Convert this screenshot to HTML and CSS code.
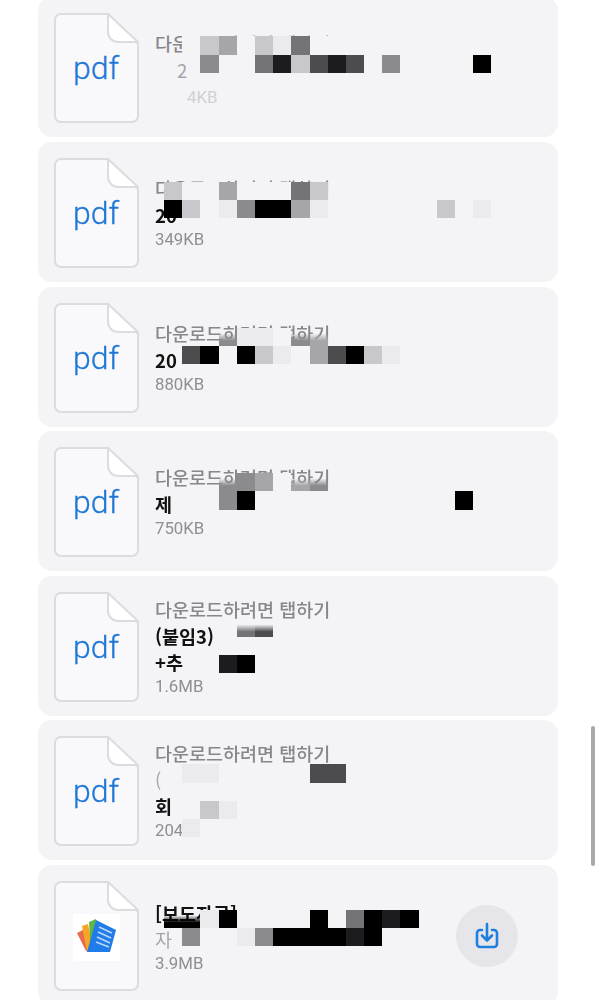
FILE: index.html
```html
<!DOCTYPE html>
<html lang="ko">
<head>
    <meta charset="UTF-8">
    <meta name="viewport" content="width=device-width, initial-scale=1.0">
    <title>첨부파일</title>
    <link rel="stylesheet" href="styles.css">
</head>
<body>
    <svg width="0" height="0" class="defs">
        <defs>
            <g id="fileShape">
                <path class="sheet" d="M7 1H54L84 31V103a6 6 0 0 1-6 6H7a6 6 0 0 1-6-6V7a6 6 0 0 1 6-6Z"/>
                <path class="fold" d="M54 1V19a10 10 0 0 0 10 10H84Z"/>
            </g>
        </defs>
    </svg>

    <div class="list">
        <!-- Card 1 -->
        <div class="card">
            <svg class="file" width="85" height="110" viewBox="0 0 85 110"><use href="#fileShape"/><text class="pdf" x="42" y="66" text-anchor="middle">pdf</text></svg>
            <div class="info">
                <div class="hint">다운로드하려면 탭하기</div>
                <div class="name ghost indent1">2</div>
                <div class="size ghost indent2">4KB</div>
            </div>
            <div class="mosaic">
                <div class="mrow"><i></i><i class="m0"></i><i class="m2"></i><i class="m3"></i><i class="m0"></i><i class="m2"></i><i class="m1"></i><i class="m5"></i><i class="m0"></i><i class="m0"></i></div>
                <div class="mrow"><i></i><i></i><i class="m4"></i><i></i><i></i><i class="m5"></i><i class="m7"></i><i class="m2"></i><i class="m6"></i><i class="m7"></i><i class="m6"></i><i></i><i class="m4"></i><i></i><i></i><i></i><i></i><i class="m8"></i></div>
            </div>
        </div>

        <!-- Card 2 -->
        <div class="card">
            <svg class="file" width="85" height="110" viewBox="0 0 85 110"><use href="#fileShape"/><text class="pdf" x="42" y="66" text-anchor="middle">pdf</text></svg>
            <div class="info">
                <div class="hint">다운로드하려면 탭하기</div>
                <div class="name">20</div>
                <div class="size">349KB</div>
            </div>
            <div class="mosaic">
                <div class="mrow"><i class="m2"></i><i class="m0"></i><i class="m0"></i><i class="m3"></i><i class="m0"></i><i class="m0"></i><i class="m0"></i><i class="m5"></i><i class="m2"></i></div>
                <div class="mrow"><i class="m8"></i><i class="m2"></i><i class="m0"></i><i class="m1"></i><i class="m4"></i><i class="m8"></i><i class="m8"></i><i class="m3"></i><i class="m1"></i><i></i><i></i><i></i><i></i><i></i><i></i><i class="m2"></i><i></i><i class="m1"></i></div>
            </div>
        </div>

        <!-- Card 3 -->
        <div class="card">
            <svg class="file" width="85" height="110" viewBox="0 0 85 110"><use href="#fileShape"/><text class="pdf" x="42" y="66" text-anchor="middle">pdf</text></svg>
            <div class="info">
                <div class="hint">다운로드하려면 탭하기</div>
                <div class="name">20</div>
                <div class="size">880KB</div>
            </div>
            <div class="mosaic">
                <div class="mrow"><i></i><i></i><i></i><i class="m4 low"></i><i class="m1"></i><i class="m1"></i><i class="m0"></i><i class="m4 low"></i><i class="m3 low"></i></div>
                <div class="mrow"><i></i><i class="m6"></i><i class="m8"></i><i class="m0"></i><i class="m8"></i><i class="m2"></i><i class="m1"></i><i class="m0"></i><i class="m3"></i><i class="m6"></i><i class="m8"></i><i class="m2"></i><i class="m1"></i></div>
            </div>
        </div>

        <!-- Card 4 -->
        <div class="card">
            <svg class="file" width="85" height="110" viewBox="0 0 85 110"><use href="#fileShape"/><text class="pdf" x="42" y="66" text-anchor="middle">pdf</text></svg>
            <div class="info">
                <div class="hint">다운로드하려면 탭하기</div>
                <div class="name">제</div>
                <div class="size">750KB</div>
            </div>
            <div class="mosaic">
                <div class="mrow"><i></i><i></i><i></i><i class="m4 low"></i><i class="m4"></i><i class="m3"></i><i class="m0"></i><i class="m3 low"></i><i class="m4 low"></i></div>
                <div class="mrow"><i></i><i></i><i></i><i class="m4"></i><i class="m8"></i><i></i><i></i><i></i><i></i><i></i><i></i><i></i><i></i><i></i><i></i><i></i><i class="m8"></i></div>
            </div>
        </div>

        <!-- Card 5 -->
        <div class="card">
            <svg class="file" width="85" height="110" viewBox="0 0 85 110"><use href="#fileShape"/><text class="pdf" x="42" y="66" text-anchor="middle">pdf</text></svg>
            <div class="info">
                <div class="hint">다운로드하려면 탭하기</div>
                <div class="name">(붙임3)</div>
                <div class="name">+추</div>
                <div class="size">1.6MB</div>
            </div>
            <div class="mosaic">
                <div class="mrow"><i></i><i></i><i></i><i></i><i class="m5 low"></i><i class="m6 low"></i></div>
                <div class="mrow"></div>
                <div class="mrow"><i></i><i></i><i></i><i class="m7"></i><i class="m8"></i></div>
            </div>
        </div>

        <!-- Card 6 -->
        <div class="card">
            <svg class="file" width="85" height="110" viewBox="0 0 85 110"><use href="#fileShape"/><text class="pdf" x="42" y="66" text-anchor="middle">pdf</text></svg>
            <div class="info">
                <div class="hint">다운로드하려면 탭하기</div>
                <div class="name ghost">(</div>
                <div class="name">회</div>
                <div class="size">204</div>
            </div>
            <div class="mosaic">
                <div class="mrow"><i></i><i class="m1"></i><i class="m1"></i><i></i><i></i><i></i><i></i><i></i><i class="m6"></i><i class="m6"></i></div>
                <div class="mrow"></div>
                <div class="mrow"><i></i><i></i><i class="m2"></i><i class="m1"></i></div>
                <div class="mrow"><i></i><i class="m1"></i></div>
            </div>
        </div>

        <!-- Card 7 -->
        <div class="card">
            <svg class="file" width="85" height="110" viewBox="0 0 85 110">
                <use href="#fileShape"/>
                <rect x="19" y="33" width="47" height="47" fill="#fff"/>
                <path d="M23 52 29 49 38 70 32 70Z" fill="#ea6a4f"/>
                <path d="M28 45 34 43 40 71 33 71Z" fill="#f5a623"/>
                <path d="M35 41 42 38 44 71 37 71Z" fill="#5fb548"/>
                <path d="M42 39 62 49 56 71 33 71Z" fill="#1f7ce8"/>
                <path class="lines" d="M45 46 58 52M44 51 57 57M43 56 56 62M42 61 55 66"/>
            </svg>
            <div class="info last">
                <div class="name">[보도자료]</div>
                <div class="name ghost">자</div>
                <div class="size">3.9MB</div>
            </div>
            <div class="mosaic">
                <div class="mrow"><i class="m8 low"></i><i class="m8 low"></i><i class="m1"></i><i class="m8"></i><i></i><i></i><i></i><i></i><i class="m8"></i><i></i><i class="m5"></i><i class="m8"></i><i class="m7"></i><i class="m8"></i></div>
                <div class="mrow"><i></i><i class="m4"></i><i></i><i></i><i class="m1"></i><i class="m4"></i><i class="m8"></i><i class="m8"></i><i class="m8"></i><i class="m8"></i><i class="m7"></i><i class="m8"></i></div>
            </div>
            <button class="save">
                <svg width="26" height="28" viewBox="0 0 26 28">
                    <path d="M8 8H6a3 3 0 0 0-3 3V22a3 3 0 0 0 3 3H20a3 3 0 0 0 3-3V11a3 3 0 0 0-3-3H18"/>
                    <path d="M13 2V18M8 13.5 13 18.5 18 13.5"/>
                </svg>
            </button>
        </div>
    </div>

    <div class="scrollbar"></div>
</body>
</html>
```

FILE: styles.css
```css
html, body {
    margin: 0;
    padding: 0;
    height: 1000px;
    overflow: hidden;
    background-color: #fff;
}

body {
    position: relative;
    font-family: "Noto Sans CJK KR", sans-serif;
}

.defs {
    position: absolute;
}

.list {
    display: flex;
    flex-direction: column;
    gap: 4.6px;
    width: 520px;
    margin: -2.6px 0 0 38px;
    filter: blur(0.4px);
}

.card {
    position: relative;
    display: flex;
    align-items: center;
    flex: none;
    gap: 16px;
    height: 140px;
    padding-left: 16px;
    box-sizing: border-box;
    border-radius: 14px;
    background-color: #f4f4f7;
}

.file {
    flex: none;
    margin-top: 2px;
}

.sheet {
    fill: #f9f9fb;
    stroke: #dcdce0;
    stroke-width: 2;
    stroke-linejoin: round;
}

.fold {
    fill: #fff;
    stroke: #dcdce0;
    stroke-width: 2;
    stroke-linejoin: round;
}

.pdf {
    font-family: Roboto, sans-serif;
    font-weight: 300;
    font-size: 32px;
    fill: #1f78d6;
    stroke: #1f78d6;
    stroke-width: 0.3;
}

.lines {
    fill: none;
    stroke: #bcd8f8;
    stroke-width: 1.6;
}

.info {
    display: flex;
    flex-direction: column;
    padding-top: 2px;
}

.info.last {
    padding-top: 5px;
}

.hint {
    font-size: 18.5px;
    font-weight: 500;
    line-height: 27px;
    color: #87878b;
}

.name {
    font-size: 18.5px;
    font-weight: 700;
    line-height: 26px;
    color: #111;
}

.size {
    font-family: Roboto, "Noto Sans CJK KR", sans-serif;
    font-size: 16.8px;
    line-height: 23px;
    color: #8e8e93;
}

.ghost {
    font-weight: 400;
    opacity: 0.35;
}

.indent1 {
    margin-left: 22px;
}

.indent2 {
    margin: 3px 0 -3px 32px;
}

/* pixelated blur over file names */
.mosaic {
    position: absolute;
    left: 126px;
    top: 39px;
}

.card:nth-child(2) .mosaic { top: 40px; }
.card:nth-child(3) .mosaic { top: 41px; }
.card:nth-child(4) .mosaic { top: 42px; }
.card:nth-child(5) .mosaic { top: 43px; }
.card:nth-child(6) .mosaic { top: 44px; }
.card:nth-child(7) .mosaic { top: 45px; }

.mrow {
    display: flex;
    height: 18.2px;
}

.mrow i {
    flex: none;
    width: 18.2px;
}

.m0 { background-color: #f4f4f7; }
.m1 { background-color: #ebebee; }
.m2 { background-color: #c8c8cc; }
.m3 { background-color: #a6a6a9; }
.m4 { background-color: #8b8b8d; }
.m5 { background-color: #747477; }
.m6 { background-color: #4c4c4e; }
.m7 { background-color: #1c1c1e; }
.m8 { background-color: #000; }

.low {
    -webkit-mask-image: linear-gradient(transparent 30%, #000 70%);
    mask-image: linear-gradient(transparent 30%, #000 70%);
}

.save {
    position: absolute;
    left: 418px;
    top: 40px;
    display: flex;
    align-items: center;
    justify-content: center;
    width: 62px;
    height: 62px;
    padding: 0;
    border: none;
    border-radius: 50%;
    background-color: #e6e6ea;
}

.save path {
    fill: none;
    stroke: #1f7fe0;
    stroke-width: 2.6;
    stroke-linecap: round;
    stroke-linejoin: round;
}

.scrollbar {
    position: absolute;
    left: 591px;
    top: 726px;
    width: 4px;
    height: 140px;
    border-radius: 2px;
    background-color: #a9a9ab;
}
```
